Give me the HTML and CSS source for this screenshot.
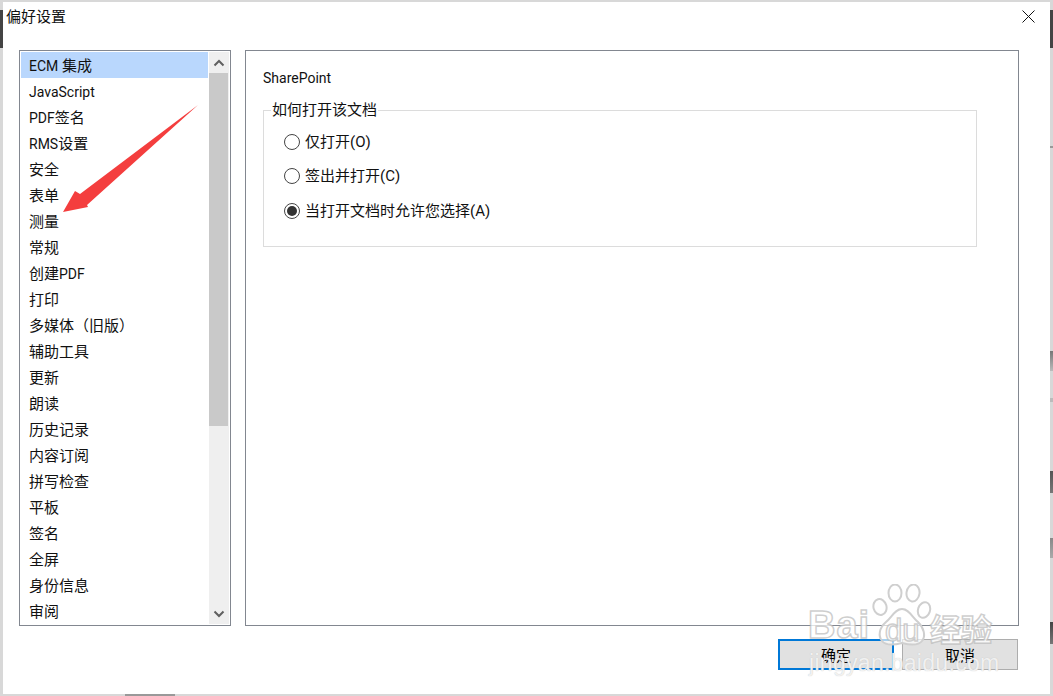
FILE: index.html
```html
<!DOCTYPE html>
<html lang="zh-CN">
<head>
<meta charset="utf-8">
<title>偏好设置</title>
<link rel="stylesheet" href="styles.css">
</head>
<body>
<div class="dialog">
  <header class="titlebar">
    <span class="title">偏好设置</span>
    <svg class="close" width="13" height="13" viewBox="0 0 13 13"><path d="M0.5 0.5L12.5 12.5M12.5 0.5L0.5 12.5" stroke="#111" stroke-width="1" fill="none"/></svg>
  </header>
  <main class="body">
    <nav class="listbox">
      <ul class="items">
        <li class="item selected"><span class="la">ECM</span> 集成</li>
        <li class="item"><span class="la">JavaScript</span></li>
        <li class="item"><span class="la">PDF</span>签名</li>
        <li class="item"><span class="la">RMS</span>设置</li>
        <li class="item">安全</li>
        <li class="item">表单</li>
        <li class="item">测量</li>
        <li class="item">常规</li>
        <li class="item">创建<span class="la">PDF</span></li>
        <li class="item">打印</li>
        <li class="item">多媒体（旧版）</li>
        <li class="item">辅助工具</li>
        <li class="item">更新</li>
        <li class="item">朗读</li>
        <li class="item">历史记录</li>
        <li class="item">内容订阅</li>
        <li class="item">拼写检查</li>
        <li class="item">平板</li>
        <li class="item">签名</li>
        <li class="item">全屏</li>
        <li class="item">身份信息</li>
        <li class="item">审阅</li>
      </ul>
      <div class="scrollbar">
        <div class="scroll-btn"><svg width="12" height="8" viewBox="0 0 12 8"><path d="M1.5 6.5L6 2L10.5 6.5" stroke="#606060" stroke-width="2" fill="none"/></svg></div>
        <div class="track"><div class="thumb"></div></div>
        <div class="scroll-btn"><svg width="12" height="8" viewBox="0 0 12 8"><path d="M1.5 1.5L6 6L10.5 1.5" stroke="#606060" stroke-width="2" fill="none"/></svg></div>
      </div>
    </nav>
    <section class="panel">
      <h2 class="panel-title">SharePoint</h2>
      <fieldset class="group">
        <legend class="legend">如何打开该文档</legend>
        <label class="radio"><span class="dot"></span>仅打开(O)</label>
        <label class="radio"><span class="dot"></span>签出并打开(C)</label>
        <label class="radio"><span class="dot on"></span>当打开文档时允许您选择(A)</label>
      </fieldset>
    </section>
  </main>
  <footer class="actions">
    <button class="btn primary">确定</button>
    <button class="btn">取消</button>
  </footer>
</div>
<svg class="arrow" width="210" height="120" viewBox="0 0 210 120"><polygon points="198,5 80,94 75,91 63,112 88,107 87,105" fill="#f43e3e"/></svg>
<div class="watermark">
  <svg class="paw" width="60" height="64" viewBox="0 0 60 64"><g fill="rgba(255,255,255,.65)" stroke="#cfcfcf" stroke-width="2"><ellipse cx="8" cy="23" rx="6.5" ry="8" transform="rotate(-15 8 23)"/><ellipse cx="23" cy="9" rx="6.5" ry="8.5"/><ellipse cx="41" cy="9" rx="6.5" ry="8.5" transform="rotate(8 41 9)"/><ellipse cx="52" cy="26" rx="6" ry="8" transform="rotate(18 52 26)"/><path d="M30 25C23 25 20 33 14 38C7 44 6 52 10 57C14 62 22 61 30 59C38 61 46 62 50 57C54 52 52 44 46 38C40 33 37 25 30 25Z"/></g></svg>
  <div class="wm-bai">Bai</div>
  <div class="wm-du">du</div>
  <div class="wm-cn">经验</div>
  <div class="wm-url">jingyan.baidu.com</div>
</div>
</body>
</html>
```
FILE: styles.css
```css
* { box-sizing: border-box; }
html, body { margin: 0; padding: 0; }
body {
  width: 1053px;
  height: 696px;
  overflow: hidden;
  position: relative;
  background:
    linear-gradient(#444, #444) 0 10px / 3px 38px no-repeat,
    linear-gradient(#444, #444) 1050px 10px / 3px 38px no-repeat,
    linear-gradient(#999, #999) 1050px 146px / 3px 2px no-repeat,
    linear-gradient(#777, #bbb) 1050px 351px / 3px 20px no-repeat,
    linear-gradient(#bbb, #bbb) 1050px 398px / 3px 4px no-repeat,
    linear-gradient(#555, #777) 1050px 471px / 3px 22px no-repeat,
    linear-gradient(#888, #aaa) 1050px 538px / 3px 20px no-repeat,
    linear-gradient(#444, #777) 1050px 622px / 3px 22px no-repeat,
    linear-gradient(#999, #999) 125px 694px / 50px 2px no-repeat,
    #d8d8d8;
  font: 15px/20px Roboto, "Noto Sans CJK SC", sans-serif;
  color: #111;
}
.dialog {
  width: 1047px;
  height: 692px;
  margin: 2px 0 0 3px;
  background: #fff;
  display: flex;
  flex-direction: column;
}
.la { font-size: 14px; }
.titlebar {
  height: 48px;
  display: flex;
  justify-content: space-between;
  padding: 5px 15px 0 3px;
}
.title { line-height: 20px; }
.close { margin-top: 3px; }
.body {
  display: flex;
  gap: 14px;
  padding-left: 16px;
}
.listbox {
  width: 212px;
  height: 576px;
  border: 1px solid #828790;
  padding: 1px;
  display: flex;
  overflow: hidden;
}
.items {
  list-style: none;
  margin: 0;
  padding: 0;
  width: 187px;
}
.item {
  height: 26px;
  line-height: 28px;
  padding-left: 8px;
  white-space: nowrap;
}
.selected { background: #b9d7fd; }
.scrollbar {
  width: 20px;
  margin-left: 1px;
  background: #efefef;
  display: flex;
  flex-direction: column;
}
.scroll-btn {
  height: 21px;
  display: flex;
  align-items: center;
  justify-content: center;
  flex: none;
}
.track { flex: 1; }
.thumb { width: 19px; height: 353px; background: #c9c9c9; }
.panel {
  width: 774px;
  height: 576px;
  border: 1px solid #828790;
  padding: 17px 17px 0;
}
.panel-title {
  margin: 0 0 12px;
  font-size: 14px;
  font-weight: 400;
  line-height: 20px;
}
.group {
  width: 714px;
  height: 147px;
  margin: 0;
  border: 1px solid #dcdcdc;
  padding: 11.5px 0 0 20px;
}
.legend {
  padding: 0 1px;
  margin-left: -13px;
  line-height: 20px;
}
.radio {
  display: flex;
  align-items: center;
  height: 20px;
  margin-bottom: 14.5px;
  gap: 5px;
}
.dot {
  width: 16px;
  height: 16px;
  border: 1px solid #444;
  border-radius: 50%;
  display: flex;
  align-items: center;
  justify-content: center;
  background: #fff;
}
.dot.on::after {
  content: "";
  width: 10px;
  height: 10px;
  border-radius: 50%;
  background: #333;
}
.actions {
  display: flex;
  justify-content: flex-end;
  gap: 8px;
  padding: 13px 32px 0 0;
}
.btn {
  width: 116px;
  height: 31px;
  background: #e1e1e1;
  border: 1px solid #adadad;
  font: 15px/20px "Noto Sans CJK SC", sans-serif;
  color: #000;
  padding: 0;
}
.primary { border: 2px solid #0078d7; }
.arrow {
  position: absolute;
  left: 0;
  top: 100px;
}
.watermark {
  position: absolute;
  left: 808px;
  top: 584px;
  width: 190px;
  height: 92px;
  font-family: "Liberation Sans", sans-serif;
  color: rgba(255,255,255,.75);
  pointer-events: none;
}
.paw { position: absolute; left: 64px; top: 0; }
.wm-bai, .wm-du, .wm-cn, .wm-url {
  position: absolute;
  white-space: nowrap;
  -webkit-text-stroke: 1.5px rgba(185,185,185,.7);
}
.wm-bai { left: 0; top: 20px; font-size: 38px; line-height: 42px; font-weight: 700; letter-spacing: 1px; }
.wm-du { left: 77px; top: 29px; font-size: 31px; line-height: 36px; }
.wm-cn { left: 122px; top: 24px; font: 700 31px/40px "Noto Sans CJK SC", sans-serif; }
.wm-url { left: 1px; top: 66px; font-size: 23px; line-height: 26px; letter-spacing: .3px; -webkit-text-stroke: 0; color: rgba(255,255,255,.8); text-shadow: 0 0 1px #bbb; }
```
